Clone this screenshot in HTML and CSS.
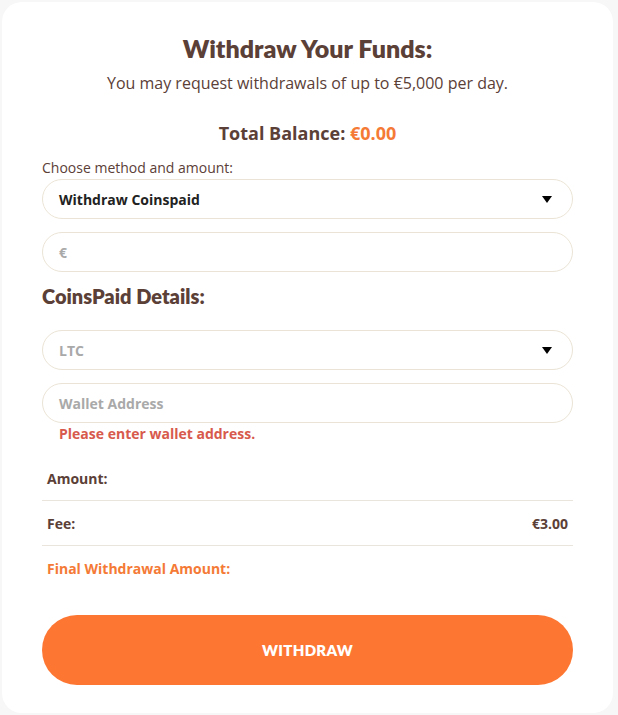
FILE: index.html
```html
<!DOCTYPE html>
<html>
<head>
<meta charset="utf-8">
<link rel="stylesheet" href="styles.css">
</head>
<body>
<div class="card">
  <h1 class="title">Withdraw Your Funds:</h1>
  <p class="subtitle">You may request withdrawals of up to €5,000 per day.</p>
  <div class="balance">Total Balance: <span class="accent">€0.00</span></div>
  <div class="label">Choose method and amount:</div>
  <div class="field select">
    <span class="val">Withdraw Coinspaid</span>
    <svg class="caret" width="10" height="7" viewBox="0 0 10 7"><path d="M0 0H10L5 7Z" fill="#000"/></svg>
  </div>
  <div class="field gap">
    <span class="ph">€</span>
  </div>
  <h2 class="section">CoinsPaid Details:</h2>
  <div class="field select">
    <span class="ph">LTC</span>
    <svg class="caret" width="10" height="7" viewBox="0 0 10 7"><path d="M0 0H10L5 7Z" fill="#000"/></svg>
  </div>
  <div class="field gap">
    <span class="ph">Wallet Address</span>
  </div>
  <div class="error">Please enter wallet address.</div>
  <div class="summary">
    <div class="row"><span>Amount:</span><span></span></div>
    <div class="row"><span>Fee:</span><span>€3.00</span></div>
    <div class="row final"><span>Final Withdrawal Amount:</span><span></span></div>
  </div>
  <button class="btn">WITHDRAW</button>
</div>
</body>
</html>
```
FILE: styles.css
```css
html, body {
  margin: 0;
  padding: 0;
}
body {
  background: #f7f7f7;
  font-family: "Open Sans", "Liberation Sans", sans-serif;
  color: #5b4037;
}
.card {
  background: #fff;
  margin: 2px 5px 0 2px;
  height: 711px;
  border-radius: 20px;
  padding: 0 40px;
  box-sizing: border-box;
  overflow: hidden;
}
.title {
  margin: 0;
  padding-top: 30px;
  font-family: "Lato", "Noto Sans", sans-serif;
  font-weight: 800;
  font-size: 25px;
  line-height: 32px;
  text-align: center;
  color: #5b4037;
}
.subtitle {
  margin: 8px 0 0;
  font-size: 16px;
  line-height: 22px;
  text-align: center;
  color: #5b4037;
}
.balance {
  margin-top: 27px;
  text-align: center;
  font-weight: 700;
  font-size: 18px;
  line-height: 24px;
}
.accent {
  color: #f47a36;
}
.label {
  margin-top: 13px;
  font-size: 14px;
  line-height: 19px;
  padding-bottom: 2px;
}
.field {
  height: 40px;
  border: 1px solid #ebe4d6;
  border-radius: 20px;
  box-sizing: border-box;
  display: flex;
  align-items: center;
  justify-content: space-between;
  padding: 0 20px 0 16px;
  font-size: 14px;
  font-weight: 700;
}
.field.gap {
  margin-top: 13px;
}
.val {
  color: #222;
}
.ph {
  color: #a9a9a9;
}
.caret {
  display: block;
}
.section {
  margin: 10px 0 20px;
  font-family: "Lato", "Noto Sans", sans-serif;
  font-weight: 800;
  font-size: 20px;
  line-height: 28px;
  color: #5b4037;
}
.error {
  margin-top: 2px;
  padding-left: 17px;
  color: #d75a4d;
  font-weight: 700;
  font-size: 14px;
  line-height: 18px;
}
.summary {
  margin-top: 13px;
}
.row {
  display: flex;
  justify-content: space-between;
  padding: 0 5px;
  height: 44px;
  align-items: center;
  font-size: 14px;
  font-weight: 700;
  color: #5b4037;
  border-bottom: 1px solid #e9e5dc;
}
.row.final {
  border-bottom: none;
  color: #f47a36;
}
.btn {
  display: block;
  width: 100%;
  margin-top: 25px;
  height: 70px;
  border: none;
  border-radius: 35px;
  background: #fd7632;
  color: #fff;
  font-family: "Lato", "Noto Sans", sans-serif;
  font-weight: 800;
  font-size: 15px;
  letter-spacing: 0.3px;
}
```
